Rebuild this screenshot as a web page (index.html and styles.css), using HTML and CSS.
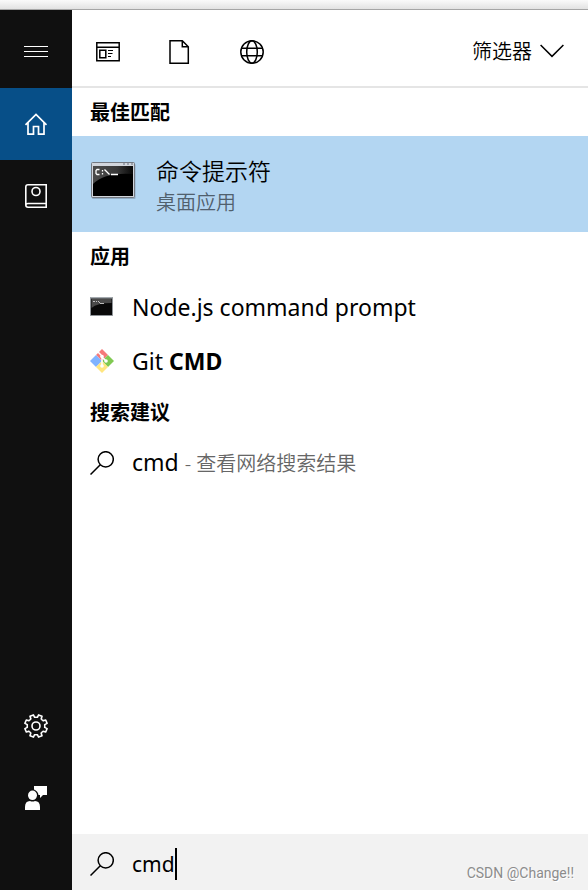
FILE: index.html
```html
<!DOCTYPE html>
<html lang="zh-CN">
<head>
<meta charset="utf-8">
<meta name="viewport" content="width=device-width, initial-scale=1">
<title>cmd</title>
<link rel="stylesheet" href="styles.css">
</head>
<body>
<div class="panel">
  <nav class="rail">
    <button class="rail-item rail-menu" type="button" aria-label="菜单">
      <svg class="icon" viewBox="0 0 24 24" fill="#fff"><path d="M0 6h24v1H0zM0 11h24v1H0zM0 16h24v1H0z"/></svg>
    </button>
    <button class="rail-item rail-active" type="button" aria-label="主页">
      <svg class="icon" viewBox="0 0 24 24" fill="none" stroke="#fff" stroke-width="1.700"><path d="M1.500 12.800 12 2.500l10.500 10.300M4 10.500v11.700h5.500v-7.700h5v7.700H20V10.500"/></svg>
    </button>
    <button class="rail-item" type="button" aria-label="笔记本">
      <svg class="icon" viewBox="0 0 24 24" fill="none" stroke="#fff" stroke-width="1.600"><path d="M22.200 19.500V.8H4Q1.800.8 1.800 3v18Q1.800 23.200 4 23.200h18.200v-3.700H4Q1.800 19.500 1.800 21.500"/><circle cx="12" cy="7.500" r="4"/></svg>
    </button>
    <button class="rail-item rail-bottom" type="button" aria-label="设置">
      <svg class="icon" viewBox="-12 -12 24 24" fill="none" stroke="#fff" stroke-width="1.600" stroke-linejoin="round">
        <defs><path id="tooth" d="M0-8.800 1.400-8.700 2.600-11.100 6-9.700 5.200-7.100 6.200-6.200"/></defs>
        <use href="#tooth"/><use href="#tooth" transform="rotate(45)"/><use href="#tooth" transform="rotate(90)"/><use href="#tooth" transform="rotate(135)"/><use href="#tooth" transform="rotate(180)"/><use href="#tooth" transform="rotate(225)"/><use href="#tooth" transform="rotate(270)"/><use href="#tooth" transform="rotate(315)"/>
        <circle r="4"/>
      </svg>
    </button>
    <button class="rail-item" type="button" aria-label="反馈">
      <svg class="icon" viewBox="0 0 24 24" fill="#fff"><path d="M10 0h13v9h-4l-3 3V9h-1.500Q14 5 10 3.500z"/><ellipse cx="8.500" cy="9.300" rx="4.500" ry="4.800"/><path d="M1 24v-3q0-6 5-6 2.500 1 5 0 5 0 5 6v3z"/></svg>
    </button>
  </nav>
  <main class="content">
    <header class="filters">
      <button class="filter" type="button" aria-label="应用">
        <svg class="icon" viewBox="0 0 24 24" fill="none" stroke="#000"><path stroke-width="1.500" d="M.8 2.800h22.400v18H.8zM.8 7.200h22.400"/><path stroke-width="1.500" d="M3.800 10.300h6v7.400h-6z"/><path stroke-width="1.200" d="M12 10.500h5M12 13.500h4.500M12 16.500h3"/></svg>
      </button>
      <button class="filter" type="button" aria-label="文档">
        <svg class="icon" viewBox="0 0 24 24" fill="none" stroke="#000" stroke-width="1.500"><path d="M2 .8h12.300l6 6v16.400H2zM14.300.8v6h6"/></svg>
      </button>
      <button class="filter" type="button" aria-label="网页">
        <svg class="icon" viewBox="0 0 24 24" fill="none" stroke="#000" stroke-width="1.500"><circle cx="12" cy="12" r="11.200"/><ellipse cx="12" cy="12" rx="5.300" ry="11.200"/><path d="M1.500 8.300h21M1.500 15.700h21"/></svg>
      </button>
      <button class="filter-menu" type="button">筛选器
        <svg class="icon" viewBox="0 0 24 24" fill="none" stroke="#000" stroke-width="1.500"><path d="M.6 6 12 17.400 23.400 6"/></svg>
      </button>
    </header>

    <h2 class="heading">最佳匹配</h2>
    <a class="best" href="#cmd">
      <svg class="best-icon" viewBox="0 0 46 38">
        <defs>
          <linearGradient id="shine" x2="1" y2="0"><stop stop-color="#4b4b4b"/><stop offset=".6" stop-color="#383838"/><stop offset="1" stop-color="#080808"/></linearGradient>
        </defs>
        <rect x="2" y="2" width="43.500" height="35" rx="1" fill="#6d8298" opacity=".5"/>
        <rect x="1.500" y=".5" width="43" height="35" rx="1" fill="#d1d5dc" stroke="#747981"/>
        <path d="M33 2h2M37 2h2M41 2h2" stroke="#68717e"/>
        <path d="M3 4h40v30H3z"/>
        <path d="M3 4h40v8Q15 10 3 22z" fill="url(#shine)"/>
        <path d="M9.500 7.500H7L6 8.500v3l1 1h2.500M12.500 8v1.500M12.500 11v1.500M14.500 7.500l5 5M21 12.500h7" fill="none" stroke="#fff" stroke-width="1.300"/>
      </svg>
      <span class="best-text"><span class="best-title">命令提示符</span><span class="best-kind">桌面应用</span></span>
    </a>

    <h2 class="heading">应用</h2>
    <a class="row" href="#node">
      <svg class="icon" viewBox="0 0 24 24">
        <path d="M.5 2.500h22v18H.5z" fill="#090909" stroke="#8f9499"/><path d="M1 3h21" stroke="#b9c0c5"/><path d="M1.500 4h20v4Q7 8 1.500 13z" fill="#4a4a4a"/><path d="M3 6.500h2M6 6.500h1M8 6l2 2M10 8.500h4" stroke="#ddd" stroke-width=".8"/>
      </svg>
      <span>Node.js command prompt</span>
    </a>
    <a class="row" href="#git">
      <svg class="icon" viewBox="0 0 24 24">
        <path d="M12 0l6 6-6 6-6-6z" fill="#f57979"/><path d="M18 6l6 6-6 6-6-6z" fill="#80c952"/><path d="M6 6l6 6-6 6-6-6z" fill="#80b3ff"/><path d="M12 12l6 6-6 6-6-6z" fill="#ffe680"/>
        <path d="M8 3l4 4v10M12 8l4 4" fill="none" stroke="#fff" stroke-width="1.500"/><circle cx="12" cy="7.500" r="1.800" fill="#fff"/><circle cx="16" cy="12" r="1.800" fill="#fff"/><circle cx="12" cy="17" r="1.800" fill="#fff"/>
      </svg>
      <span>Git <b>CMD</b></span>
    </a>

    <h2 class="heading">搜索建议</h2>
    <a class="row" href="#web">
      <svg class="icon" viewBox="0 0 24 24" fill="none" stroke="#000" stroke-width="1.500"><circle cx="15.700" cy="8.300" r="7.600"/><path d="M10.300 13.700.5 23.500"/></svg>
      <span>cmd <span class="hint">- 查看网络搜索结果</span></span>
    </a>

    <footer class="search">
      <label class="search-label" for="query" aria-label="搜索">
        <svg class="icon" viewBox="0 0 24 24" fill="none" stroke="#000" stroke-width="1.500"><circle cx="15.700" cy="8.300" r="7.600"/><path d="M10.300 13.700.5 23.500"/></svg>
      </label>
      <input class="search-input" id="query" type="text" value="cmd">
      <span class="caret"></span>
      <span class="credit">CSDN @Change!!</span>
    </footer>
  </main>
</div>
</body>
</html>
```
FILE: styles.css
```css
* {
  box-sizing: border-box;
}

body {
  margin: 0;
  min-height: 100vh;
  display: flex;
  flex-direction: column;
  padding-top: 9px;
  background: linear-gradient(#fafafa, #e2e2e2 9px);
  color: #000;
  font-family: "Noto Sans", "Noto Sans CJK SC", sans-serif;
}

button {
  border: 0;
  padding: 0;
  background: none;
  color: inherit;
  font: inherit;
}

a {
  color: inherit;
  text-decoration: none;
}

.icon {
  display: block;
  flex: none;
  width: 24px;
  height: 24px;
}

.panel {
  flex: 1;
  display: flex;
  border-top: 1px solid #a5a5a5;
  background: #fff;
}

.rail {
  flex: none;
  width: 72px;
  display: flex;
  flex-direction: column;
  padding-bottom: 56px;
  background: #101010;
}

.rail-item {
  display: flex;
  align-items: center;
  justify-content: center;
  height: 72px;
}

.rail-menu {
  height: 78px;
  padding-top: 6px;
}

.rail-active {
  background: #074f88;
}

.rail-bottom {
  margin-top: auto;
}

.content {
  flex: 1;
  min-width: 0;
  display: flex;
  flex-direction: column;
}

.filters {
  display: flex;
  align-items: center;
  height: 78px;
  padding: 8px 24px 0 0;
  border-bottom: 2px solid #e5e5e5;
}

.filter {
  display: flex;
  align-items: center;
  justify-content: center;
  width: 72px;
  height: 68px;
}

.filter-menu {
  display: flex;
  align-items: center;
  gap: 8px;
  height: 68px;
  margin-left: auto;
  padding-bottom: 2px;
  font-family: "Noto Sans CJK SC", sans-serif;
  font-size: 20px;
  font-weight: 350;
  line-height: 24px;
}

.heading {
  margin: 0;
  padding-left: 18px;
  font-family: "Noto Sans CJK SC", sans-serif;
  font-size: 20px;
  font-weight: 700;
  line-height: 48px;
}

.best {
  display: flex;
  gap: 20px;
  height: 96px;
  padding: 18px 18px 0;
  background: #b3d6f2;
}

.best-icon {
  flex: none;
  width: 46px;
  height: 38px;
  margin-top: 8px;
}

.best-text {
  display: flex;
  flex-direction: column;
  font-family: "Noto Sans CJK SC", sans-serif;
  line-height: 32px;
  font-weight: 350;
}

.best-title {
  font-size: 23px;
}

.best-kind {
  font-size: 20px;
  color: #50606d;
}

.row {
  display: flex;
  align-items: center;
  gap: 18px;
  height: 54px;
  padding: 0 18px;
  font-size: 23px;
  line-height: 30px;
  white-space: nowrap;
}

.hint {
  color: #666;
  font-size: 20px;
  font-weight: 350;
}

.search {
  display: flex;
  align-items: center;
  height: 56px;
  margin-top: auto;
  padding: 4px 14px 0 18px;
  background: #f2f2f2;
}

.search-label {
  margin-right: 18px;
}

.search-input {
  field-sizing: content;
  min-width: 0;
  border: 0;
  padding: 0;
  outline: 0;
  background: none;
  color: inherit;
  font: inherit;
  font-size: 21px;
}

.caret {
  width: 2px;
  height: 32px;
  background: #000;
}

.credit {
  align-self: flex-end;
  margin-left: auto;
  padding-bottom: 8px;
  color: #8c8c8c;
  font-family: Roboto, sans-serif;
  font-size: 14px;
  line-height: 18px;
  text-shadow: 1px 1px #fff;
}
```
